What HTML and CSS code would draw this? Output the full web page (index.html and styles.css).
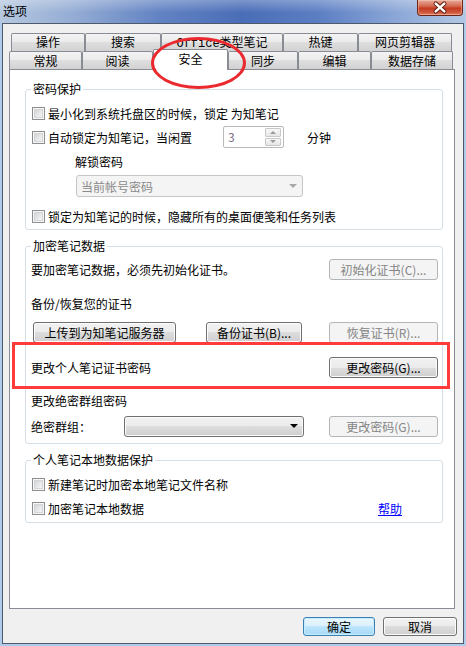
FILE: index.html
```html
<!DOCTYPE html>
<html lang="zh-CN">
<head>
<meta charset="utf-8">
<title>选项</title>
<link rel="stylesheet" href="styles.css">
</head>
<body>
<div class="window">
  <div class="titlebar">
    <span class="title">选项</span>
    <span class="close">
      <svg width="46" height="15" viewBox="0 0 46 15">
        <path d="M18.5 3.5 L27.5 11.5 M27.5 3.5 L18.5 11.5" stroke="#5b1a10" stroke-width="4.6" stroke-linecap="round" fill="none"/>
        <path d="M18.5 3.5 L27.5 11.5 M27.5 3.5 L18.5 11.5" stroke="#ffffff" stroke-width="2.6" stroke-linecap="round" fill="none"/>
      </svg>
    </span>
  </div>
  <div class="frame">
    <div class="client">
      <div class="tabs">
        <div class="tabrow back">
          <div class="tab">操作</div>
          <div class="tab">搜索</div>
          <div class="tab"><span class="mono">Office</span>类型笔记</div>
          <div class="tab">热键</div>
          <div class="tab">网页剪辑器</div>
        </div>
        <div class="tabrow front">
          <div class="tab">常规</div>
          <div class="tab">阅读</div>
          <div class="tab active">安全</div>
          <div class="tab">同步</div>
          <div class="tab">编辑</div>
          <div class="tab">数据存储</div>
        </div>
      </div>
      <div class="panel">
        <fieldset class="group g1">
          <legend>密码保护</legend>
          <div class="row"><span class="cb"></span><span>最小化到系统托盘区的时候，锁定 为知笔记</span></div>
          <div class="row">
            <span class="cb"></span><span>自动锁定为知笔记，当闲置</span>
            <span class="spin">
              <span class="spin-val">3</span>
              <span class="spin-btns"><span class="sb"><span class="tri up"></span></span><span class="sb"><span class="tri down"></span></span></span>
            </span>
            <span class="unit">分钟</span>
          </div>
          <div class="row indent">解锁密码</div>
          <div class="row combo-row">
            <div class="combo dis"><span class="combo-text">当前帐号密码</span><span class="tri down grey"></span></div>
          </div>
          <div class="row"><span class="cb"></span><span>锁定为知笔记的时候，隐藏所有的桌面便笺和任务列表</span></div>
        </fieldset>

        <fieldset class="group g2">
          <legend>加密笔记数据</legend>
          <div class="row">
            <span>要加密笔记数据，必须先初始化证书。</span>
            <span class="btn dis right">初始化证书(C)...</span>
          </div>
          <div class="row m10">备份/恢复您的证书</div>
          <div class="row m5">
            <span class="btn upload">上传到为知笔记服务器</span>
            <span class="btn backup">备份证书(B)...</span>
            <span class="btn dis right">恢复证书(R)...</span>
          </div>
          <div class="row m11">
            <span>更改个人笔记证书密码</span>
            <span class="btn right">更改密码(G)...</span>
          </div>
          <div class="row m9">更改绝密群组密码</div>
          <div class="row m2">
            <span class="field-label">绝密群组：</span>
            <div class="combo"><span class="combo-text"></span><span class="tri down"></span></div>
            <span class="btn dis right">更改密码(G)...</span>
          </div>
        </fieldset>

        <fieldset class="group g3">
          <legend>个人笔记本地数据保护</legend>
          <div class="row"><span class="cb"></span><span>新建笔记时加密本地笔记文件名称</span></div>
          <div class="row"><span class="cb"></span><span>加密笔记本地数据</span><a class="help" href="#">帮助</a></div>
        </fieldset>
      </div>
      <div class="footer">
        <span class="btn ok">确定</span>
        <span class="btn cancel">取消</span>
      </div>
    </div>
  </div>
  <div class="mark-ellipse"></div>
  <div class="mark-rect"></div>
</div>
</body>
</html>
```

FILE: styles.css
```css
* { box-sizing: border-box; }
html, body { margin: 0; padding: 0; }
body {
  width: 466px;
  height: 646px;
  overflow: hidden;
  font-family: "Noto Sans CJK SC", "Noto Sans", sans-serif;
  font-size: 12px;
  color: #000;
  background: #fff;
}
.window {
  position: relative;
  width: 466px;
  height: 646px;
  background: #b0cbe9;
}
.titlebar {
  height: 23px;
  display: flex;
  align-items: flex-start;
  background:
    linear-gradient(to bottom, rgba(255,255,255,0.28), rgba(255,255,255,0) 55%),
    linear-gradient(to right, #b6c8df 0%, #94acd4 16%, #6283c3 34%, #4a6db7 52%, #5b7ec3 68%, #8ea9d8 86%, #b3c8e5 100%);
}
.title { margin: 3px 0 0 3px; line-height: 16px; }
.close {
  margin-left: auto;
  margin-right: 3px;
  width: 46px;
  height: 16px;
  border: 1px solid #6d2416;
  border-top: none;
  border-radius: 0 0 4px 4px;
  background: linear-gradient(#e6ab9c, #d66a52 40%, #c43a20 55%, #cf5a40 85%, #e08a70);
  box-shadow: inset 0 0 0 1px rgba(255,220,200,0.4);
  display: flex;
  align-items: center;
  justify-content: center;
}
.close svg { display: block; }
.frame { padding: 0 2px 2px 2px; }
.client {
  height: 621px;
  border: 1px solid #4d5a6c;
  background: #f0f0f0;
  padding: 9px 8px 0 6px;
}

/* tabs */
.tabrow { display: flex; align-items: flex-start; height: 18px; }
.tabrow.back { margin-left: 2px; }
.tab {
  flex: none;
  height: 18px;
  border: 1px solid #898c95;
  border-bottom: none;
  border-radius: 2px 2px 0 0;
  background: linear-gradient(#f3f3f3, #ebebeb 45%, #dedede 50%, #d2d2d2);
  text-align: center;
  line-height: 16px;
  padding-top: 1px;
  white-space: nowrap;
}
.back .tab:nth-child(1) { width: 74px; }
.back .tab:nth-child(2) { width: 76px; }
.back .tab:nth-child(3) { width: 122px; }
.back .tab:nth-child(4) { width: 75px; }
.back .tab:nth-child(5) { width: 94px; }
.front .tab:nth-child(1) { width: 73px; }
.front .tab:nth-child(2) { width: 71px; }
.front .tab:nth-child(3) { width: 75px; }
.front .tab:nth-child(4) { width: 70px; }
.front .tab:nth-child(5) { width: 73px; }
.front .tab:nth-child(6) { width: 82px; }
.back .tab { padding-top: 0; }
.tab.active {
  position: relative;
  z-index: 1;
  height: 21px;
  margin-top: -2px;
  background: #fff;
  line-height: 16px;
  padding-top: 1px;
}
.mono { font-family: "Liberation Mono", monospace; font-size: 12px; }

/* panel */
.panel {
  height: 540px;
  background: #fff;
  border: 1px solid #898c95;
  padding: 12px 0 0 15px;
}
.group {
  margin: 0;
  min-width: 0;
  width: 418px;
  border: 1px solid #d5dfe5;
  border-radius: 3px;
  padding: 0 4px 0 5px;
}
.group legend {
  padding: 0 2px;
  margin-left: 0;
  line-height: 14px;
  height: 14px;
}
.g1 { padding-top: 5px; padding-bottom: 1px; }
.g2 { margin-top: 9px; padding-top: 4px; padding-bottom: 5px; }
.g3 { margin-top: 9px; padding-top: 5px; padding-bottom: 2px; }

.row {
  display: flex;
  align-items: center;
  height: 24px;
  white-space: nowrap;
}
.m2 { margin-top: 2px; }
.m5 { margin-top: 5px; }
.m9 { margin-top: 9px; }
.m10 { margin-top: 10px; }
.m11 { margin-top: 11px; }
.indent { padding-left: 44px; }
.combo-row { height: 31px; align-items: flex-start; padding-top: 2px; }

/* checkbox */
.cb {
  flex: none;
  width: 13px;
  height: 13px;
  margin: 0 3px 0 1px;
  border: 1px solid #8e8f8f;
  background: linear-gradient(135deg, #c9cbce, #eff0f1 70%, #f8f8f8);
  box-shadow: inset 0 0 0 1px #f6f6f6, inset 0 0 0 2px #d3d5d8;
}

/* spin box */
.spin {
  display: flex;
  width: 61px;
  height: 22px;
  margin-left: 31px;
  border: 1px solid #b9b9b9;
  border-radius: 2px;
  background: #fff;
  padding: 1px 1px 1px 4px;
}
.spin-val { flex: 1; color: #7a6f86; line-height: 18px; }
.spin-btns { display: flex; flex-direction: column; gap: 1px; width: 16px; margin-right: 1px; }
.sb {
  flex: 1;
  border: 1px solid #c8c8c8;
  border-radius: 1px;
  background: linear-gradient(#f8f8f8, #e6e6e6);
  display: flex;
  align-items: center;
  justify-content: center;
}
.tri { display: block; width: 0; height: 0; border-left: 3px solid transparent; border-right: 3px solid transparent; }
.tri.up { border-bottom: 3px solid #9a9a9a; }
.tri.down { border-top: 3px solid #9a9a9a; }
.unit { margin-left: 23px; }

/* combo */
.combo {
  display: flex;
  align-items: center;
  height: 21px;
  width: 180px;
  border: 1px solid #707070;
  border-radius: 3px;
  background: linear-gradient(#f2f2f2, #ebebeb 50%, #dddddd 50%, #cfcfcf);
  box-shadow: inset 0 0 0 1px #fbfbfb;
  padding: 0 5px 0 4px;
}
.combo .tri.down { border-left-width: 4px; border-right-width: 4px; border-top: 4px solid #000; }
.combo.dis {
  width: 227px;
  height: 22px;
  margin-left: 45px;
  border-color: #c5c5c5;
  background: #f4f4f4;
  box-shadow: none;
  color: #8a8a8a;
}
.combo.dis .tri.down { border-top-color: #a8a8a8; }
.combo-text { flex: 1; }
.field-label { width: 93px; flex: none; }

/* buttons */
.btn {
  flex: none;
  display: flex;
  align-items: center;
  justify-content: center;
  height: 21px;
  border: 1px solid #707070;
  border-radius: 3px;
  background: linear-gradient(#f2f2f2, #ebebeb 50%, #dddddd 50%, #cfcfcf);
  box-shadow: inset 0 0 0 1px #fcfcfc;
  white-space: nowrap;
}
.btn.dis {
  border-color: #b2b6b9;
  background: #f4f4f4;
  box-shadow: none;
  color: #848484;
}
.btn.right { width: 109px; margin-left: auto; margin-right: 0; }
.btn.upload { width: 143px; margin-left: 2px; }
.btn.backup { width: 96px; margin-left: 30px; }

.help { margin-left: auto; margin-right: 36px; color: #0000ff; text-decoration: underline; }

/* footer */
.footer {
  display: flex;
  justify-content: flex-end;
  gap: 8px;
  margin: 8px -2px 0 0;
}
.footer .btn { height: 19px; }
.btn.ok {
  width: 72px;
  border-color: #3c7fb1;
  background: linear-gradient(#eaf6fd, #d9f0fc 50%, #bee6fd 50%, #a7d9f5);
  box-shadow: inset 0 0 0 1px #c6ecff;
}
.btn.cancel { width: 74px; }

/* annotations drawn over the screenshot */
.mark-ellipse {
  position: absolute;
  left: 151px;
  top: 37px;
  width: 95px;
  height: 52px;
  border: 3px solid #ea2a2e;
  border-radius: 50%;
  z-index: 5;
}
.mark-rect {
  position: absolute;
  left: 12px;
  top: 342px;
  width: 438px;
  height: 47px;
  border: 3px solid #ff3b3b;
  z-index: 5;
}
```
